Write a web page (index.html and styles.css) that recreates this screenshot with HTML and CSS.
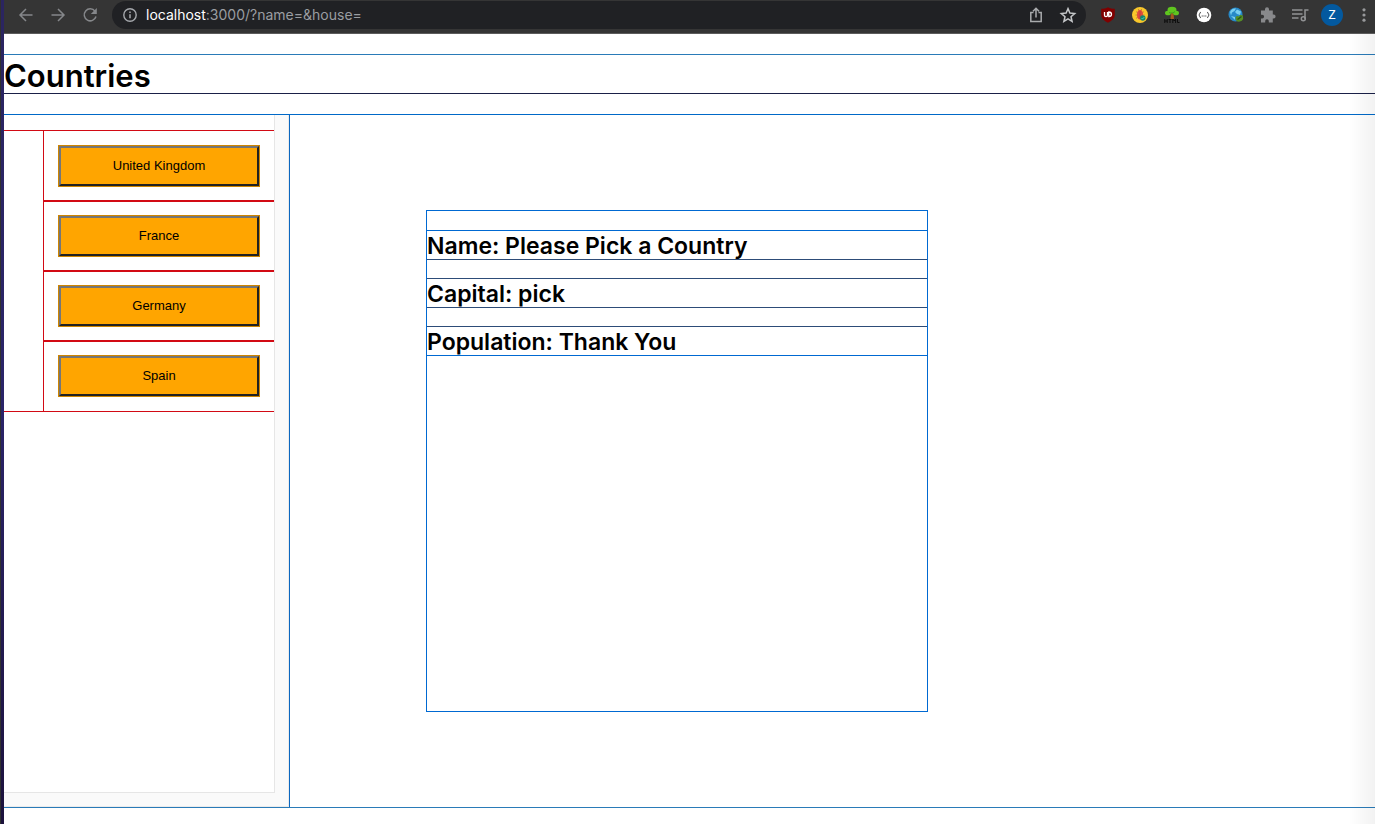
FILE: index.html
```html
<!DOCTYPE html>
<html lang="en">
<head>
<meta charset="utf-8">
<title>Countries</title>
<link rel="stylesheet" href="styles.css">
</head>
<body>
<div class="desktop-edge"></div>
<div class="window">
  <header class="toolbar">
    <button class="tool" aria-label="Back"><svg width="20" height="20" viewBox="0 0 20 20"><path d="M16.500 10H4M10 4l-6 6 6 6" class="line"/></svg></button>
    <button class="tool" aria-label="Forward"><svg width="20" height="20" viewBox="0 0 20 20"><path d="M3.500 10H16M10 4l6 6-6 6" class="line"/></svg></button>
    <button class="tool" aria-label="Reload"><svg width="20" height="20" viewBox="0 0 20 20"><path d="M15 6.200A6 6 0 1 0 16 11.500" class="line"/><path d="M16.800 3v6h-6z" fill="#85878a"/></svg></button>
    <div class="address">
      <svg width="16" height="16" viewBox="0 0 16 16"><circle cx="8" cy="8" r="6.200" fill="none" stroke="#a5a8ac" stroke-width="1.400"/><path d="M8 7.200v4M8 4.500V6" stroke="#a5a8ac" stroke-width="1.500"/></svg>
      <a class="url" href="#"><span class="host">localhost</span>:3000/?name=&amp;house=</a>
      <button class="tool" aria-label="Share"><svg width="20" height="20" viewBox="0 0 20 20"><path d="M7.500 7.500H4.800v9h10.400v-9h-2.700M10 12.500V3.500M7 6.200l3-3 3 3" class="line light"/></svg></button>
      <button class="tool" aria-label="Bookmark"><svg width="20" height="20" viewBox="0 0 20 20"><path d="M10 3.600l1.900 4.500 4.800.4-3.700 3.200 1.100 4.800-4.100-2.600-4.100 2.600 1.100-4.800-3.700-3.200 4.800-.4z" class="line bright"/></svg></button>
    </div>
    <nav class="extensions" aria-label="Extensions">
      <button class="tool" aria-label="UD"><svg width="20" height="20" viewBox="0 0 20 20"><path d="M10 2.300c2 1.300 4.400 1.500 6.800 1.500v6c0 3.700-3 6-6.800 8-3.800-2-6.800-4.300-6.800-8v-6c2.400 0 4.800-.2 6.800-1.500z" fill="#800000"/><path d="M6.500 7v3.300c0 1.700 3 1.700 3 0V7M10.800 7v4.500c3.600 0 3.600-4.500 0-4.500z" fill="none" stroke="#fff" stroke-width="1.300"/></svg></button>
      <button class="tool" aria-label="Bug finder"><svg width="20" height="20" viewBox="0 0 20 20"><circle cx="10" cy="10" r="8" fill="#f9c72b"/><path d="M6 6.500l8 7M14 6.500l-8 7M5.500 10h9M8.300 4l1 2M11.700 4l-1 2" stroke="#b8783a" stroke-width=".8"/><ellipse cx="10" cy="9.800" rx="3" ry="4.800" fill="#df4b3e"/><path d="M10 6v8" stroke="#b8433a" stroke-width=".8"/><circle cx="12.800" cy="13" r="2.700" fill="#16876e"/><path d="M11.500 13l1 1 1.800-1.900" fill="none" stroke="#43d4b4"/></svg></button>
      <button class="tool" aria-label="HTML tree"><svg width="20" height="20" viewBox="0 0 20 20"><path d="M9 7h2.500l.5 7H8.500z" fill="#a45a20"/><g fill="#5fc51f"><ellipse cx="10" cy="5" rx="4.500" ry="3.300"/><ellipse cx="6" cy="8" rx="3" ry="2.300"/><ellipse cx="14" cy="8" rx="3" ry="2.300"/></g><path d="M7 7.500c2 1 5 .5 6-1" fill="none" stroke="#36941b" stroke-width=".8"/><path d="M2.800 14v4M5.200 14v4M2.800 16h2.400M6.500 14.500h3M8 14.500V18M10.800 18v-4l1.400 2 1.400-2v4M15.500 14v3.500h2" fill="none" stroke="#0c0c0c"/></svg></button>
      <button class="tool" aria-label="JSON viewer"><svg width="20" height="20" viewBox="0 0 20 20"><circle cx="10" cy="10" r="7.300" fill="#fff"/><path d="M6.800 7.300c-1.500 0-.5 2.200-2 2.700 1.500.5.500 2.700 2 2.700M13.200 7.300c1.500 0 .5 2.200 2 2.700-1.500.5-.5 2.700-2 2.700M7.700 11h1M9.500 11h1M11.300 11h1" fill="none" stroke="#333"/></svg></button>
      <button class="tool" aria-label="Web tools"><svg width="20" height="20" viewBox="0 0 20 20"><circle cx="9.500" cy="9.500" r="7" fill="#2789c7"/><path d="M4 7c1-3 4-4 6-3.500L8.500 6 6 7.500l-1 3zM11 4.500l4 2-1 3.500-3-1-2-2zM5 11l4 1v3z" fill="#79cef0"/><path d="M9.500 13c0-2 2-2.700 3.500-1.500 0-2.500 5-2 4 .8 1 3-3 5-5 4.200-1.500 0-2.500-1.700-2.500-3.500z" fill="#568f25"/><path d="M11.500 14.500l4-3" stroke="#28531b" stroke-width="1.300"/></svg></button>
      <button class="tool" aria-label="Extensions"><svg width="20" height="20" viewBox="0 0 20 20"><path d="M3 5.500h4V4.200a2 2 0 0 1 4 0v1.300h3.800v4h.8a2 2 0 0 1 0 4h-.8V17.500h-4V16a1.800 1.800 0 0 0-3.600 0v1.500H3v-4h1.200a1.900 1.900 0 0 0 0-3.800H3z" fill="#88898b"/></svg></button>
      <button class="tool" aria-label="Media"><svg width="20" height="20" viewBox="0 0 20 20"><path d="M2 5h10.500M2 9h10.500M2 13h6.500M15 14V5h3.500" fill="none" stroke="#919294" stroke-width="1.500"/><circle cx="13.300" cy="13.700" r="2" fill="none" stroke="#919294" stroke-width="1.500"/></svg></button>
      <button class="tool avatar" aria-label="Profile Z">Z</button>
      <button class="tool" aria-label="Menu"><svg width="20" height="20" viewBox="0 0 20 20"><g fill="#98999b"><circle cx="10" cy="4.800" r="1.600"/><circle cx="10" cy="10" r="1.600"/><circle cx="10" cy="15.200" r="1.600"/></g></svg></button>
    </nav>
  </header>
  <main class="page">
    <h1 class="title">Countries</h1>
    <div class="layout">
      <aside class="sidebar">
        <div class="panel">
          <ul class="countries">
            <li class="country"><button class="pick">United Kingdom</button></li>
            <li class="country"><button class="pick">France</button></li>
            <li class="country"><button class="pick">Germany</button></li>
            <li class="country"><button class="pick">Spain</button></li>
          </ul>
        </div>
      </aside>
      <section class="detail">
        <div class="card">
          <h2 class="fact">Name: Please Pick a Country</h2>
          <h2 class="fact">Capital: pick</h2>
          <h2 class="fact">Population: Thank You</h2>
        </div>
      </section>
    </div>
    <div class="edge-shade"></div>
  </main>
</div>
</body>
</html>
```
FILE: styles.css
```css
* { box-sizing: border-box; }
body {
  margin: 0;
  min-height: 100vh;
  display: flex;
  background: #fff;
  color: #000;
  font-family: Inter, "Liberation Sans", sans-serif;
}
.desktop-edge {
  width: 4px;
  background: linear-gradient(90deg, #303030 1px, transparent 1px), linear-gradient(#2b2560, #2a2468 50%, #1c123c);
}
.window {
  flex: 1;
  min-width: 0;
  display: flex;
  flex-direction: column;
}
.toolbar {
  height: 34px;
  padding: 0 1px 3px 12px;
  display: flex;
  align-items: center;
  gap: 12px;
  background: #353535;
  border-bottom: 1px solid #5c5c5c;
}
.tool {
  width: 20px;
  height: 20px;
  flex: none;
  padding: 0;
  border: 0;
  background: none;
}
.tool svg, .address svg { display: block; }
.line { fill: none; stroke: #85878a; stroke-width: 1.5; }
.light { stroke: #a9abad; }
.bright { stroke: #c4c6c8; }
.address {
  flex: 1;
  height: 28px;
  padding: 0 8px 0 10px;
  display: flex;
  align-items: center;
  gap: 12px;
  border-radius: 14px;
  background: #202124;
}
.url {
  flex: 1;
  margin-left: -4px;
  color: #9a9da1;
  font: 14px/20px Inter, "Liberation Sans", sans-serif;
  text-decoration: none;
}
.host { color: #fff; }
.extensions {
  display: flex;
  align-items: center;
  gap: 12px;
}
.avatar {
  width: 22px;
  height: 22px;
  margin: 0 -1px;
  border-radius: 50%;
  background: #03599f;
  color: #fff;
  font: 12px/22px Roboto, sans-serif;
}
.page {
  position: relative;
  flex: 1;
  display: flex;
  flex-direction: column;
  padding: 21px 0 17px;
  overflow: hidden;
}
.title {
  margin: 0 0 22px;
  padding-top: 4px;
  font-size: 31px;
  line-height: 34px;
  font-weight: 600;
  box-shadow: 0 -1px #2a7bb8, 0 1px #1a2048;
}
.layout {
  flex: 1;
  display: flex;
  box-shadow: 0 -1px #0069c8, 0 1px #2a7bb8;
}
.sidebar {
  width: 286px;
  flex: none;
  display: flex;
  padding: 0 14px 14px 0;
  background: #fafafa;
  border-right: 1px solid #0b67c0;
  box-shadow: inset -1px -1px #ebebeb;
}
.panel {
  flex: 1;
  padding-top: 16px;
  background: #fff;
  border-right: 1px solid #e6e6e6;
  border-bottom: 1px solid #e6e6e6;
  overflow: hidden;
}
.countries {
  margin: 0;
  padding: 0 0 0 40px;
  list-style: none;
  outline: 1px solid #d20a14;
}
.country {
  padding: 15px;
  outline: 1px solid #d20a14;
}
.pick {
  display: block;
  width: 100%;
  height: 40px;
  border: 2px solid;
  border-color: #767676 #212121 #212121 #767676;
  outline: 1px solid #cf8500;
  background: orange;
  color: #000;
  font: 13px/16px "Liberation Sans", Arial, sans-serif;
}
.detail {
  flex: 1;
  padding: 96px 0 96px 137px;
}
.card {
  width: 500px;
  height: 500px;
  padding-top: 20px;
  outline: 1px solid #0069d2;
}
.fact {
  margin: 0 0 20px;
  padding-top: 2px;
  font-size: 23px;
  line-height: 26px;
  font-weight: 600;
  box-shadow: 0 -1px #2d4c78, 0 1px #2d4c78;
}
.fact:first-child { box-shadow: 0 -1px #0069d2, 0 1px #2d4c78; }
.fact:last-child { box-shadow: 0 -1px #2d4c78, 0 1px #0069d2; }
.edge-shade {
  position: absolute;
  top: 0;
  right: 0;
  bottom: 0;
  width: 26px;
  background: linear-gradient(90deg, transparent, rgba(0, 0, 0, 0.05));
  pointer-events: none;
}
```
